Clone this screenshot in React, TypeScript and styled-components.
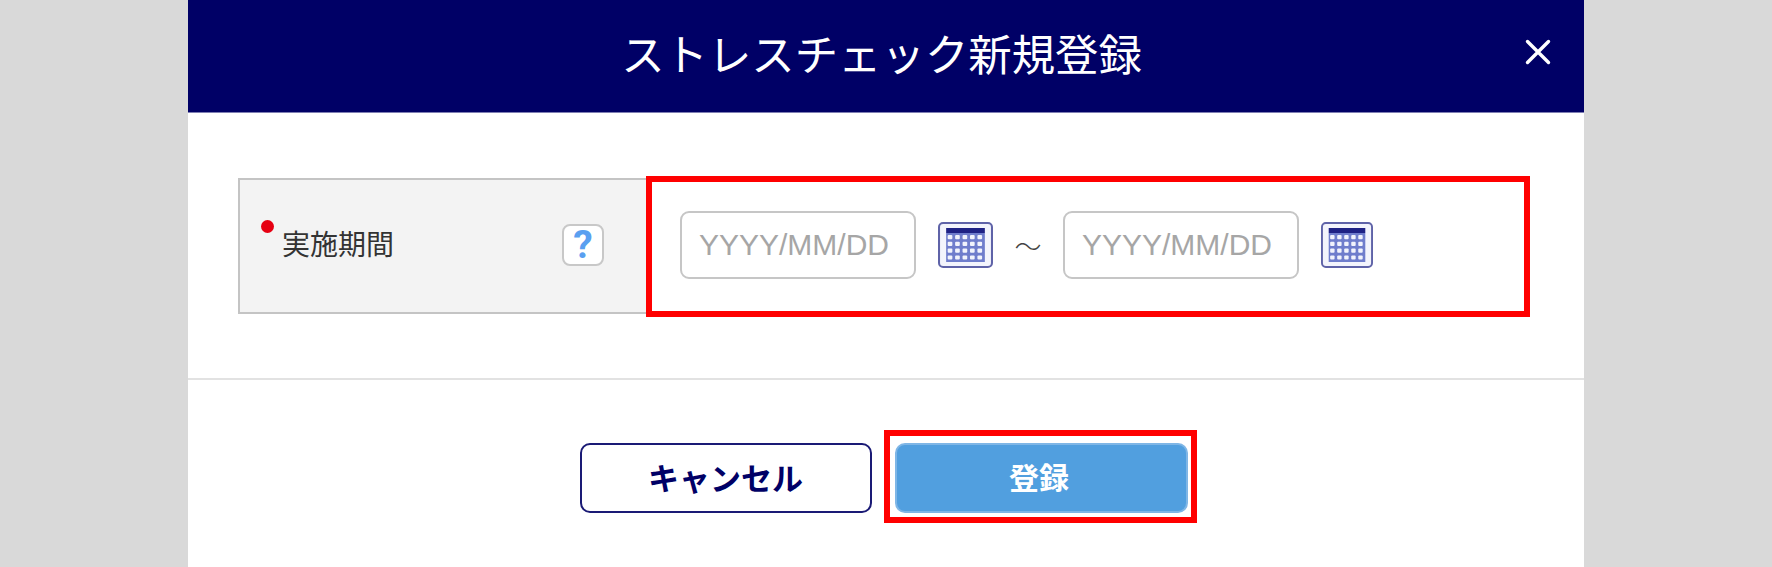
import React from 'react';
import styled, { createGlobalStyle } from 'styled-components';

const GlobalStyle = createGlobalStyle`
  html, body {
    margin: 0;
    height: 100%;
    overflow: hidden;
    background: #d9d9d9;
  }
  body {
    font-family: "Liberation Sans", "Noto Sans CJK JP", sans-serif;
  }
`;

const Page = styled.div`
  display: flex;
  justify-content: center;
  height: 567px;
`;

const Modal = styled.div`
  width: 1396px;
  background: #fff;
  display: flex;
  flex-direction: column;
`;

const Header = styled.header`
  height: 112px;
  display: grid;
  grid-template-columns: 1fr auto 1fr;
  align-items: center;
  background: #000066;
  border-bottom: 1px solid #7f7fb3;
`;

const Title = styled.h1`
  grid-column: 2;
  margin: 0 9px 7px 0;
  color: #fff;
  font-family: "Noto Sans CJK JP", sans-serif;
  font-size: 43.4px;
  font-weight: 400;
  line-height: 1;
`;

const CloseButton = styled.button`
  justify-self: end;
  width: 26px;
  height: 26px;
  margin: 0 33px 8px 0;
  padding: 0;
  border: none;
  background: none;
  display: flex;
`;

const Form = styled.div`
  display: flex;
  align-items: flex-start;
  height: 267px;
  padding: 63px 0 0 50px;
  box-sizing: border-box;
  border-bottom: 2px solid #e2e2e2;
`;

const LabelCell = styled.div`
  box-sizing: border-box;
  width: 412px;
  height: 136px;
  margin-top: 2px;
  margin-right: -4px;
  padding: 39px 0 0 21px;
  display: flex;
  align-items: flex-start;
  background: #f3f3f3;
  border: 2px solid #c4c4c4;
`;

const RequiredDot = styled.span`
  flex: none;
  width: 13px;
  height: 13px;
  margin-top: 1px;
  border-radius: 50%;
  background: #e60012;
`;

const LabelText = styled.span`
  flex: none;
  width: 280px;
  margin: 6px 0 0 8px;
  color: #333;
  font-family: "Noto Sans CJK JP", sans-serif;
  font-size: 28px;
  line-height: 36px;
`;

const HelpButton = styled.span`
  flex: none;
  box-sizing: border-box;
  width: 42px;
  height: 42px;
  margin-top: 5px;
  display: flex;
  align-items: center;
  justify-content: center;
  background: #fff;
  border: 2px solid #c8c8c8;
  border-radius: 8px;
  color: #5a9ff0;
  font-family: Roboto, sans-serif;
  font-size: 39px;
  font-weight: 700;
`;

const Highlight = styled.div`
  box-sizing: border-box;
  display: flex;
  background: #fff;
  border: 6px solid #ff0000;
`;

const PeriodBox = styled(Highlight)`
  width: 884px;
  height: 141px;
  padding: 29px 0 0 28px;
  align-items: flex-start;
`;

const DateField = styled.div`
  display: flex;
  align-items: center;
  gap: 22px;
`;

const DateInput = styled.input`
  box-sizing: border-box;
  width: 236px;
  height: 68px;
  padding: 0 0 0 17px;
  background: #fff;
  border: 2px solid #c6c6c6;
  border-radius: 9px;
  font-family: "Liberation Sans", sans-serif;
  font-size: 30px;
  &::placeholder {
    color: #a6a6a6;
    opacity: 1;
  }
`;

const Tilde = styled.span`
  width: 70px;
  height: 68px;
  display: flex;
  align-items: center;
  justify-content: center;
  color: #444;
  font-family: "Noto Sans CJK JP", sans-serif;
  font-size: 27px;
  font-weight: 300;
`;

const Footer = styled.div`
  display: flex;
  justify-content: center;
  align-items: flex-start;
  gap: 12px;
  padding: 50px 0 0 0;
  margin-left: 5px;
`;

const RegisterBox = styled(Highlight)`
  padding: 7px 3px 4px 5px;
`;

const Button = styled.button<{ $primary?: boolean }>`
  box-sizing: border-box;
  width: ${(p) => (p.$primary ? 293 : 292)}px;
  height: 70px;
  margin-top: ${(p) => (p.$primary ? 0 : 13)}px;
  padding: 0 ${(p) => (p.$primary ? 5 : 1)}px 4px 0;
  border-radius: 10px;
  border: 2px solid ${(p) => (p.$primary ? '#7fb6e6' : '#1a1a75')};
  background: ${(p) => (p.$primary ? '#519fdf' : '#fff')};
  color: ${(p) => (p.$primary ? '#fff' : '#000066')};
  font-family: "Noto Sans CJK JP", sans-serif;
  font-size: ${(p) => (p.$primary ? 30 : 31)}px;
  font-weight: 700;
`;

const CalendarSvg = styled.svg`
  flex: none;
  filter: blur(0.4px);
`;

const CloseIcon = () => (
  <svg width="26" height="26" viewBox="0 0 26 26">
    <path d="M2.5 2.5 L23.5 23.5 M23.5 2.5 L2.5 23.5" stroke="#fff" strokeWidth="3.4" strokeLinecap="round" />
  </svg>
);

const CalendarIcon = ({ width }: { width: number }) => {
  const cols = [0, 1, 2, 3, 4];
  const rows = [0, 1, 2, 3];
  return (
    <CalendarSvg width={width} height="46" viewBox="0 0 54 46" preserveAspectRatio="none">
      <rect x="1" y="1" width="52" height="44" rx="4" fill="#f3f4fc" stroke="#5f63a8" strokeWidth="2" />
      <rect x="8" y="6" width="38" height="5" fill="#1f2285" />
      <rect x="8" y="11" width="38" height="29" fill="#6f7dcc" />
      {rows.map((r) =>
        cols.map((c) => (
          <rect key={`${r}-${c}`} x={9.5 + c * 7.3} y={13 + r * 6.8} width="4.6" height="4.2" rx="1" fill="#f1f3fc" />
        ))
      )}
    </CalendarSvg>
  );
};

const App = () => {
  return (
    <Page>
      <GlobalStyle />
      <Modal>
        <Header>
          <Title>ストレスチェック新規登録</Title>
          <CloseButton aria-label="閉じる">
            <CloseIcon />
          </CloseButton>
        </Header>
        <Form>
          <LabelCell>
            <RequiredDot />
            <LabelText>実施期間</LabelText>
            <HelpButton>?</HelpButton>
          </LabelCell>
          <PeriodBox>
            <DateField>
              <DateInput placeholder="YYYY/MM/DD" />
              <CalendarIcon width={55} />
            </DateField>
            <Tilde>～</Tilde>
            <DateField>
              <DateInput placeholder="YYYY/MM/DD" />
              <CalendarIcon width={52} />
            </DateField>
          </PeriodBox>
        </Form>
        <Footer>
          <Button>キャンセル</Button>
          <RegisterBox>
            <Button $primary>登録</Button>
          </RegisterBox>
        </Footer>
      </Modal>
    </Page>
  );
};

export default App;
